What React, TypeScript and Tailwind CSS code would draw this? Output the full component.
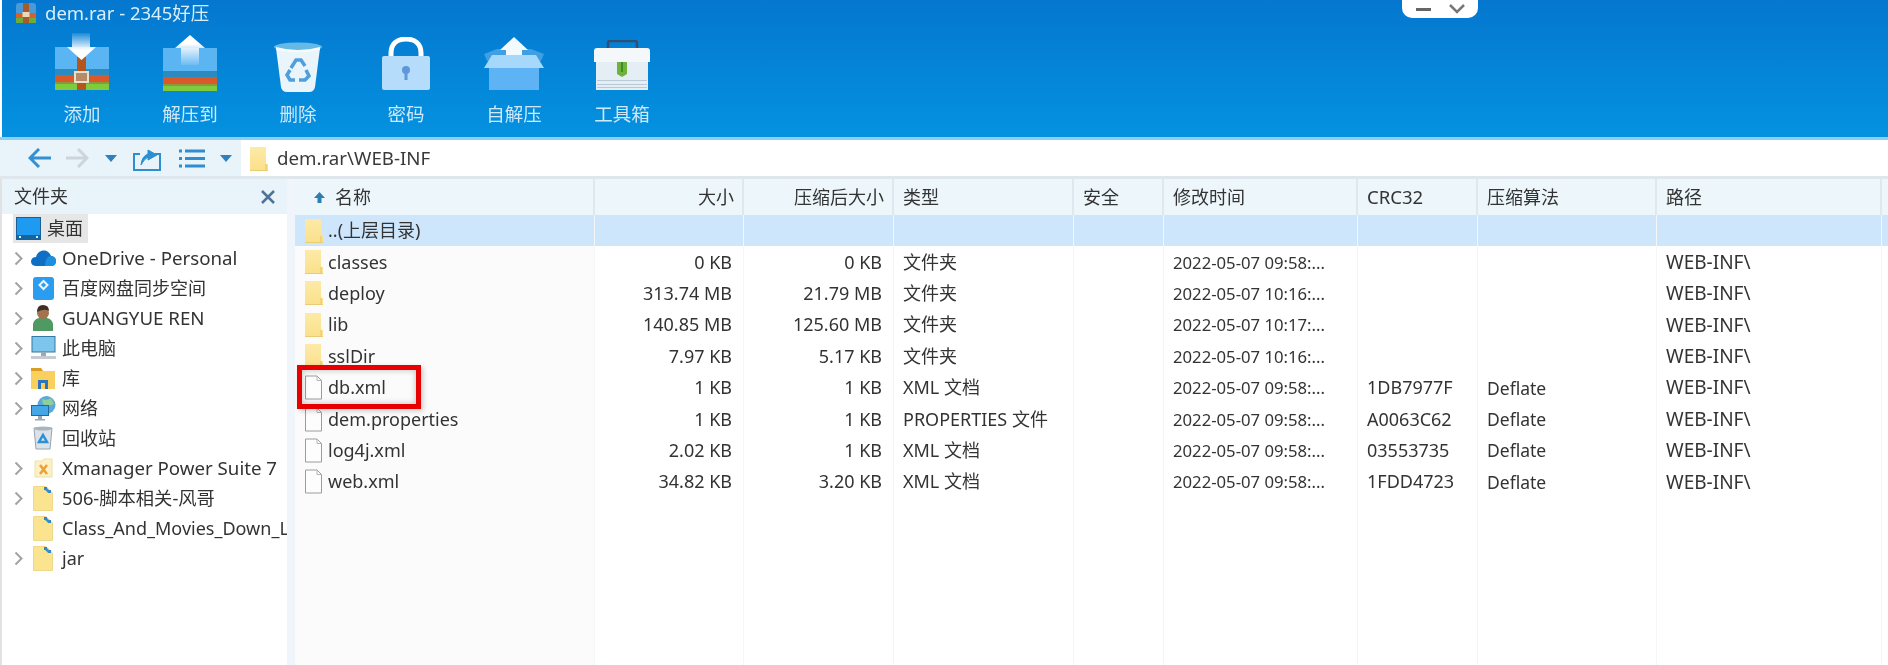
import React from 'react'

function ArchiveTitleIcon() {
  return (
    <svg width="22" height="20" viewBox="0 0 22 20" className="shrink-0">
      <path d="M1 3Q1 0 4 0H18Q21 0 21 3V12H1Z" fill="#4a9ad8" />
      <rect x="1" y="10" width="20" height="5" fill="#d8602c" />
      <rect x="1" y="15" width="20" height="5" fill="#6cab3c" />
      <rect x="8" y="0" width="6" height="20" fill="#a9592a" />
      <rect x="7.500" y="9" width="7" height="5" fill="#e9d9b8" />
    </svg>
  )
}

function AddIcon() {
  return (
    <svg width="54" height="58" viewBox="0 0 54 58">
      <defs>
        <linearGradient id="addArrow" x1="0" y1="0" x2="0" y2="1">
          <stop offset="0" stopColor="#fff" stopOpacity="0.1" />
          <stop offset="0.65" stopColor="#fff" />
        </linearGradient>
      </defs>
      <rect x="0" y="14" width="54" height="22" fill="#5cb5f3" />
      <rect x="0" y="36" width="54" height="6" fill="#2b8abf" />
      <rect x="0" y="42" width="54" height="7" fill="#d9592a" />
      <rect x="0" y="49" width="54" height="2" fill="#8a9a3a" />
      <rect x="0" y="51" width="54" height="6" fill="#7fcb3c" />
      <rect x="22" y="24" width="9" height="33" fill="#b6561f" />
      <rect x="20" y="39" width="13" height="10" fill="#b98a66" stroke="#e6e0cf" strokeWidth="2" />
      <path d="M17 0H35V14H41L26.500 27L12 14H17Z" fill="url(#addArrow)" />
    </svg>
  )
}

function ExtractIcon() {
  return (
    <svg width="54" height="56" viewBox="0 0 54 56">
      <defs>
        <linearGradient id="upArrow" x1="0" y1="0" x2="0" y2="1">
          <stop offset="0.3" stopColor="#fff" />
          <stop offset="1" stopColor="#fff" stopOpacity="0.1" />
        </linearGradient>
      </defs>
      <rect x="0" y="13" width="54" height="23" fill="#5cb5f3" />
      <rect x="0" y="36" width="54" height="6" fill="#2b8abf" />
      <rect x="0" y="42" width="54" height="7" fill="#d9592a" />
      <rect x="0" y="49" width="54" height="2" fill="#8a9a3a" />
      <rect x="0" y="51" width="54" height="5" fill="#7fcb3c" />
      <path d="M27 0L42 13H36V30H18V13H12Z" fill="url(#upArrow)" />
    </svg>
  )
}

function TrashIcon() {
  return (
    <svg width="48" height="50" viewBox="0 0 48 50">
      <path d="M2 6L7 45Q8 50 13 50H35Q40 50 41 45L46 6Z" fill="#eaf4fb" />
      <ellipse cx="24" cy="5" rx="24" ry="4.500" fill="#64b9e6" />
      <path d="M2 5Q24 11 46 5L46 8Q24 13 2 8Z" fill="#f4fafd" />
      <g fill="none" stroke="#4f9fdc" strokeWidth="3.500">
        <path d="M17 26L22 18H27L31 24" />
        <path d="M32 28L35 34L31 38H25" />
        <path d="M21 38H16L13 33L16 28" />
      </g>
    </svg>
  )
}

function LockIcon() {
  return (
    <svg width="50" height="54" viewBox="0 0 50 54">
      <path d="M10 22V16C10 7 16 2 25 2C34 2 40 7 40 16V22" fill="none" stroke="#fff" strokeWidth="5" />
      <rect x="1" y="19" width="48" height="34" rx="2" fill="#b5dcfb" />
      <circle cx="25" cy="33" r="4" fill="#5f96dc" />
      <rect x="23.500" y="34" width="3" height="9" fill="#5f96dc" />
    </svg>
  )
}

function SelfExtractIcon() {
  return (
    <svg width="62" height="54" viewBox="0 0 62 54">
      <path d="M1 17L14 12H48L61 17L58 24H4Z" fill="#3f9fe2" />
      <rect x="6" y="30" width="50" height="23" fill="#5db3f4" />
      <path d="M31 0L45 13H39V20H23V13H17Z" fill="#f2faff" />
      <path d="M9 18H53L61 31H1Z" fill="#a6d8fb" />
    </svg>
  )
}

function ToolboxIcon() {
  return (
    <svg width="56" height="50" viewBox="0 0 56 50">
      <path d="M14 9V3Q14 1 16 1H41Q43 1 43 3V9" fill="none" stroke="#2d4f78" strokeWidth="2.500" />
      <path d="M3 8H53Q56 8 56 11V22H0V11Q0 8 3 8Z" fill="#f4f8fa" />
      <rect x="2" y="22" width="52" height="28" fill="#e4eef4" />
      <path d="M23 22H33V34L28 37L23 34Z" fill="#6eb43c" />
      <rect x="27" y="22" width="2" height="10" fill="#3f8a2a" />
      <rect x="3" y="40" width="50" height="1" fill="#b9c9d5" />
      <rect x="3" y="44" width="50" height="1" fill="#b9c9d5" />
      <rect x="3" y="47" width="50" height="1" fill="#b9c9d5" />
    </svg>
  )
}

function Chevron() {
  return (
    <svg width="9" height="15" viewBox="0 0 9 15" className="shrink-0">
      <path d="M1.500 1.500L7.500 7.500L1.500 13.500" fill="none" stroke="#a3a3a3" strokeWidth="2" />
    </svg>
  )
}

function FolderIcon() {
  return (
    <svg width="19" height="24" viewBox="0 0 19 24" className="shrink-0">
      <defs>
        <linearGradient id="folderFill" x1="0" y1="0" x2="0" y2="1">
          <stop offset="0" stopColor="#fdeaa8" />
          <stop offset="1" stopColor="#fbe08a" />
        </linearGradient>
      </defs>
      <path d="M1 0H17V17H19V24H1Z" fill="url(#folderFill)" />
      <path d="M17 17V24" stroke="#e4c468" strokeWidth="1" />
      <path d="M1 23.500H19" stroke="#e9cd75" strokeWidth="1" />
    </svg>
  )
}

function FileIcon() {
  return (
    <svg width="19" height="25" viewBox="0 0 19 25" className="shrink-0">
      <path d="M1.500 1H13L17.500 5.500V24H1.500Z" fill="#fdfdfd" stroke="#9c9c9c" strokeWidth="1" />
      <path d="M13 1V5.500H17.500" fill="none" stroke="#b5b5b5" strokeWidth="1" />
    </svg>
  )
}

function DesktopIcon() {
  return (
    <svg width="25" height="23" viewBox="0 0 25 23" className="shrink-0">
      <rect x="0.500" y="0.500" width="24" height="22" fill="#1e9bf0" stroke="#1a5f96" />
      <rect x="1" y="18" width="23" height="4" fill="#14649f" />
      <rect x="3" y="19" width="2" height="2" fill="#dcefff" />
      <rect x="20" y="19" width="2" height="2" fill="#dcefff" />
    </svg>
  )
}

function CloudIcon() {
  return (
    <svg width="25" height="16" viewBox="0 0 25 16" className="shrink-0">
      <path d="M5 16C1 16 0 13 0 11.500C0 9 2 7 5 7C6 3 9 0.500 13 0.500C16.500 0.500 19 3 20 6C23 6 25 8.500 25 11C25 14 23 16 20 16Z" fill="#0f6fc4" />
      <path d="M14 16H20C23 16 25 14 25 11C25 8.500 23 6 20 6C17 6 14 9 14 16Z" fill="#1e8fdc" />
    </svg>
  )
}

function BaiduIcon() {
  return (
    <svg width="21" height="23" viewBox="0 0 21 23" className="shrink-0">
      <rect x="0" y="0" width="21" height="23" rx="3" fill="#2a9df0" />
      <path d="M10.500 4L14.500 8L10.500 12L6.500 8Z" fill="none" stroke="#eaf6ff" strokeWidth="2" />
    </svg>
  )
}

function UserIcon() {
  return (
    <svg width="20" height="26" viewBox="0 0 20 26" className="shrink-0">
      <path d="M0 26V19Q1 14 6 13H14Q19 14 20 19V26Z" fill="#4f9a62" />
      <circle cx="10" cy="8" r="6" fill="#a5724f" />
      <path d="M4 7Q4 0 10 0Q16 0 16 6Q12 3 4 7Z" fill="#3b3128" />
    </svg>
  )
}

function PcIcon() {
  return (
    <svg width="25" height="24" viewBox="0 0 25 24" className="shrink-0">
      <rect x="1" y="0.500" width="23" height="15.500" fill="#7cc6ee" stroke="#34799e" />
      <rect x="10" y="16" width="5" height="4" fill="#9aa9b3" />
      <rect x="0" y="20" width="25" height="3" fill="#c4ccd2" />
    </svg>
  )
}

function LibraryIcon() {
  return (
    <svg width="24" height="21" viewBox="0 0 24 21" className="shrink-0">
      <path d="M0 0H10L12 3H24V21H0Z" fill="#f9cf5e" />
      <path d="M0 0H10L12 3H0Z" fill="#d99f24" />
      <path d="M7 21V12H17V21H14V15H10V21Z" fill="#2c74bd" />
    </svg>
  )
}

function NetworkIcon() {
  return (
    <svg width="25" height="25" viewBox="0 0 25 25" className="shrink-0">
      <circle cx="15.500" cy="9" r="9" fill="#5aa9d8" />
      <path d="M11 3Q16 5 20 2L23 8Q17 11 12 8Z" fill="#8fcf9a" />
      <rect x="0.500" y="9.500" width="17" height="10" fill="#45a7e6" stroke="#1f6c9c" />
      <rect x="7" y="20" width="4" height="3" fill="#9aa9b3" />
      <rect x="4" y="23" width="10" height="1.500" fill="#9aa9b3" />
    </svg>
  )
}

function RecycleIcon() {
  return (
    <svg width="20" height="24" viewBox="0 0 20 24" className="shrink-0">
      <path d="M1 2H19L17 23H3Z" fill="#dbe3ea" stroke="#98a4ad" />
      <ellipse cx="10" cy="2.500" rx="9" ry="2" fill="#a9b4bc" />
      <path d="M10 9L14 16H6Z" fill="none" stroke="#2c8fd6" strokeWidth="2.500" />
    </svg>
  )
}

function XmanagerIcon() {
  return (
    <svg width="19" height="20" viewBox="0 0 19 20" className="shrink-0">
      <path d="M1 3H8L10 1H18V19H1Z" fill="#fcf0c6" stroke="#efe0a8" />
      <path d="M6 7L13 16M13 7L6 16" stroke="#e8a23a" strokeWidth="2.500" />
    </svg>
  )
}

function SyncFolderIcon() {
  return (
    <svg width="20" height="25" viewBox="0 0 20 25" className="shrink-0">
      <path d="M0.500 0.500H13L19.500 7V24.500H0.500Z" fill="#fbe48f" stroke="#f0d88a" />
      <path d="M11 1L14 1L14 4L11 4Z M15 4L18 4L18 7L15 7Z" fill="#2f86c6" />
      <path d="M13 3L16 6" stroke="#3f8fbf" strokeWidth="2.500" />
    </svg>
  )
}

const tools = [
  { label: '添加', icon: <AddIcon />, box: 'pt-[33px]' },
  { label: '解压到', icon: <ExtractIcon />, box: 'pt-[35px]' },
  { label: '删除', icon: <TrashIcon />, box: 'pt-[42px]' },
  { label: '密码', icon: <LockIcon />, box: 'pt-[37px]' },
  { label: '自解压', icon: <SelfExtractIcon />, box: 'pt-[37px]' },
  { label: '工具箱', icon: <ToolboxIcon />, box: 'pt-[40px]' },
]

const latin = 'text-[18.7px]'

const tree = [
  { label: 'OneDrive - Personal', icon: <CloudIcon />, arrow: true, size: latin },
  { label: '百度网盘同步空间', icon: <BaiduIcon />, arrow: true, size: '' },
  { label: 'GUANGYUE REN', icon: <UserIcon />, arrow: true, size: latin },
  { label: '此电脑', icon: <PcIcon />, arrow: true, size: '' },
  { label: '库', icon: <LibraryIcon />, arrow: true, size: '' },
  { label: '网络', icon: <NetworkIcon />, arrow: true, size: '' },
  { label: '回收站', icon: <RecycleIcon />, arrow: false, size: '' },
  { label: 'Xmanager Power Suite 7', icon: <XmanagerIcon />, arrow: true, size: latin },
  { label: '506-脚本相关-风哥', icon: <SyncFolderIcon />, arrow: true, size: 'text-[18.3px]' },
  { label: 'Class_And_Movies_Down_Load', icon: <SyncFolderIcon />, arrow: false, size: '' },
  { label: 'jar', icon: <SyncFolderIcon />, arrow: true, size: '' },
]

const files = [
  { name: '..(上层目录)', folder: true, size: '', packed: '', type: '', time: '', crc: '', algo: '', path: '' },
  { name: 'classes', folder: true, size: '0 KB', packed: '0 KB', type: '文件夹', time: '2022-05-07 09:58:...', crc: '', algo: '', path: 'WEB-INF\\' },
  { name: 'deploy', folder: true, size: '313.74 MB', packed: '21.79 MB', type: '文件夹', time: '2022-05-07 10:16:...', crc: '', algo: '', path: 'WEB-INF\\' },
  { name: 'lib', folder: true, size: '140.85 MB', packed: '125.60 MB', type: '文件夹', time: '2022-05-07 10:17:...', crc: '', algo: '', path: 'WEB-INF\\' },
  { name: 'sslDir', folder: true, size: '7.97 KB', packed: '5.17 KB', type: '文件夹', time: '2022-05-07 10:16:...', crc: '', algo: '', path: 'WEB-INF\\' },
  { name: 'db.xml', folder: false, size: '1 KB', packed: '1 KB', type: 'XML 文档', time: '2022-05-07 09:58:...', crc: '1DB7977F', algo: 'Deflate', path: 'WEB-INF\\' },
  { name: 'dem.properties', folder: false, size: '1 KB', packed: '1 KB', type: 'PROPERTIES 文件', time: '2022-05-07 09:58:...', crc: 'A0063C62', algo: 'Deflate', path: 'WEB-INF\\' },
  { name: 'log4j.xml', folder: false, size: '2.02 KB', packed: '1 KB', type: 'XML 文档', time: '2022-05-07 09:58:...', crc: '03553735', algo: 'Deflate', path: 'WEB-INF\\' },
  { name: 'web.xml', folder: false, size: '34.82 KB', packed: '3.20 KB', type: 'XML 文档', time: '2022-05-07 09:58:...', crc: '1FDD4723', algo: 'Deflate', path: 'WEB-INF\\' },
]

const headCell = 'flex items-center h-full border-r-2 border-[#dfe8ee] pl-[9px] whitespace-nowrap'
const cell = 'flex items-center h-full border-r border-[#f3f5f6] pl-[9px] whitespace-nowrap overflow-hidden'
const numCell = 'flex items-center justify-end h-full border-r border-[#f3f5f6] pr-[11px] whitespace-nowrap'
const columns = 'grid grid-cols-[300px_149px_150px_180px_90px_194px_120px_179px_225px]'

export default function App() {
  return (
    <div className="relative flex flex-col w-[1888px] h-[665px] overflow-hidden bg-white text-[#333] text-[18px] font-['Noto_Sans','Noto_Sans_CJK_SC',sans-serif] blur-[0.5px]">
      <header className="relative h-[137px] shrink-0 ml-[2px] bg-gradient-to-b from-[#0577cf] to-[#0492e0] text-white">
        <div className="flex items-center h-[26px] pl-[13px] gap-[8px] text-[#d8eefb] text-[18.5px]">
          <ArchiveTitleIcon />
          <span>dem.rar - 2345好压</span>
        </div>
        <div className="flex pl-[26px] h-[111px] -mt-[26px]">
          {tools.map((t) => (
            <div key={t.label} className={`relative w-[108px] flex flex-col items-center ${t.box}`}>
              {t.icon}
              <span className="absolute top-[102px] text-[#cfe8fa] text-[18.5px] leading-[24px]">{t.label}</span>
            </div>
          ))}
        </div>
        <div className="absolute top-0 left-[1400px] flex items-center justify-center gap-[18px] w-[76px] h-[18px] bg-white rounded-b-[10px]">
          <span className="w-[15px] h-[3px] bg-[#666]" />
          <svg width="16" height="10" viewBox="0 0 16 10">
            <path d="M1 1L8 8L15 1" fill="none" stroke="#777" strokeWidth="2.500" />
          </svg>
        </div>
      </header>

      <nav className="flex items-stretch h-[42px] shrink-0 border-t-[3px] border-[#8fcdf3] bg-[#e9f3fa] border-b-[3px] border-b-[#dfe7ec]">
        <div className="flex items-center w-[241px] shrink-0 pl-[28px]">
          <svg width="23" height="20" viewBox="0 0 23 20" className="shrink-0">
            <path d="M11 1L2 10L11 19M2 10H23" fill="none" stroke="#3590d2" strokeWidth="3" />
          </svg>
          <svg width="23" height="20" viewBox="0 0 23 20" className="shrink-0 ml-[15px]">
            <path d="M12 1L21 10L12 19M21 10H0" fill="none" stroke="#cdd5da" strokeWidth="3" />
          </svg>
          <svg width="12" height="7" viewBox="0 0 12 7" className="shrink-0 ml-[16px]">
            <path d="M0 0H12L6 7Z" fill="#2f80bd" />
          </svg>
          <svg width="28" height="25" viewBox="0 0 28 25" className="shrink-0 ml-[16px]">
            <path d="M7 8H1V24H27V8H22" fill="none" stroke="#2f8ed0" strokeWidth="2" />
            <path d="M8 19Q9 10 15 8V4L24 9L15 14V11Q11 13 8 19Z" fill="#2f8ed0" stroke="#2f8ed0" />
          </svg>
          <svg width="26" height="19" viewBox="0 0 26 19" className="shrink-0 ml-[18px]">
            <path d="M0 2H3M6 2H26M0 9.500H3M6 9.500H26M0 17H3M6 17H26" stroke="#2f8ed0" strokeWidth="3" />
          </svg>
          <svg width="12" height="7" viewBox="0 0 12 7" className="shrink-0 ml-[15px]">
            <path d="M0 0H12L6 7Z" fill="#2f80bd" />
          </svg>
        </div>
        <div className="flex flex-1 items-center gap-[9px] bg-white pl-[8px] pt-[1px] text-[#3a3a3a] text-[18.7px]">
          <FolderIcon />
          <span>dem.rar\WEB-INF</span>
        </div>
      </nav>

      <main className="flex flex-1 min-h-0">
        <aside className="w-[287px] shrink-0 border-l-2 border-[#e2e2e2] overflow-hidden">
          <div className="flex items-center justify-between h-[35px] bg-[#e8f3fa] pl-[12px] pr-[12px]">
            <span>文件夹</span>
            <svg width="14" height="14" viewBox="0 0 14 14">
              <path d="M1 1L13 13M13 1L1 13" stroke="#4d7396" strokeWidth="2.500" />
            </svg>
          </div>
          <div className="flex items-center h-[29px] w-[75px] ml-[11px] gap-[6px] pl-[3px] bg-[#e6e6e6]">
            <DesktopIcon />
            <span>桌面</span>
          </div>
          <ul>
            {tree.map((item) => (
              <li key={item.label} className={`relative flex items-center h-[30px] pl-[60px] whitespace-nowrap overflow-hidden ${item.size}`}>
                {item.arrow && (
                  <span className="absolute left-[12px] top-[8px]">
                    <Chevron />
                  </span>
                )}
                <span className="absolute left-[28px] top-0 flex items-center justify-center w-[26px] h-[30px]">{item.icon}</span>
                <span>{item.label}</span>
              </li>
            ))}
          </ul>
        </aside>
        <div className="w-[8px] shrink-0 bg-[#eff5fa]" />
        <section className="flex flex-col flex-1 min-w-0 bg-white">
          <div className="h-[36px] shrink-0 bg-[#edf6fb]">
            <div className={`${columns} h-full`}>
              <div className={`${headCell} pl-[19px]`}>
                <svg width="11" height="11" viewBox="0 0 11 11" className="shrink-0 mr-[10px]">
                  <path d="M5.500 0L11 6H7.500V11H3.500V6H0Z" fill="#2c7fb0" />
                </svg>
                名称
              </div>
              <div className={`${headCell} justify-end pr-[8px]`}>大小</div>
              <div className={`${headCell} justify-end pr-[8px]`}>压缩后大小</div>
              <div className={headCell}>类型</div>
              <div className={headCell}>安全</div>
              <div className={headCell}>修改时间</div>
              <div className={`${headCell} text-[18.5px]`}>CRC32</div>
              <div className={headCell}>压缩算法</div>
              <div className={headCell}>路径</div>
            </div>
          </div>
          {files.map((f, i) => (
            <div key={f.name} className={`${columns} h-[31.4px] shrink-0 ${i === 0 ? 'bg-[#cde6fb]' : ''}`}>
              <div className={`${cell} gap-[5px] ${i === 0 ? '' : 'bg-[#fbfbfb]'}`}>
                {f.folder ? <FolderIcon /> : <FileIcon />}
                {f.name}
              </div>
              <div className={numCell}>{f.size}</div>
              <div className={numCell}>{f.packed}</div>
              <div className={cell}>{f.type}</div>
              <div className={cell} />
              <div className={`${cell} text-[16.7px]`}>{f.time}</div>
              <div className={cell}>{f.crc}</div>
              <div className={`${cell} text-[17.5px]`}>{f.algo}</div>
              <div className={`${cell} text-[19px]`}>{f.path}</div>
            </div>
          ))}
          <div className={`${columns} flex-1 min-h-0`}>
            <div className={`${cell} bg-[#fbfbfb]`} />
            <div className={cell} />
            <div className={cell} />
            <div className={cell} />
            <div className={cell} />
            <div className={cell} />
            <div className={cell} />
            <div className={cell} />
            <div className={cell} />
          </div>
        </section>
      </main>

      <div className="absolute left-[297px] top-[365px] w-[124px] h-[44px] border-[5px] border-[#e60000] shadow-[inset_0_0_6px_rgba(0,0,0,0.25),2px_2px_5px_rgba(0,0,0,0.2)]" />
    </div>
  )
}
